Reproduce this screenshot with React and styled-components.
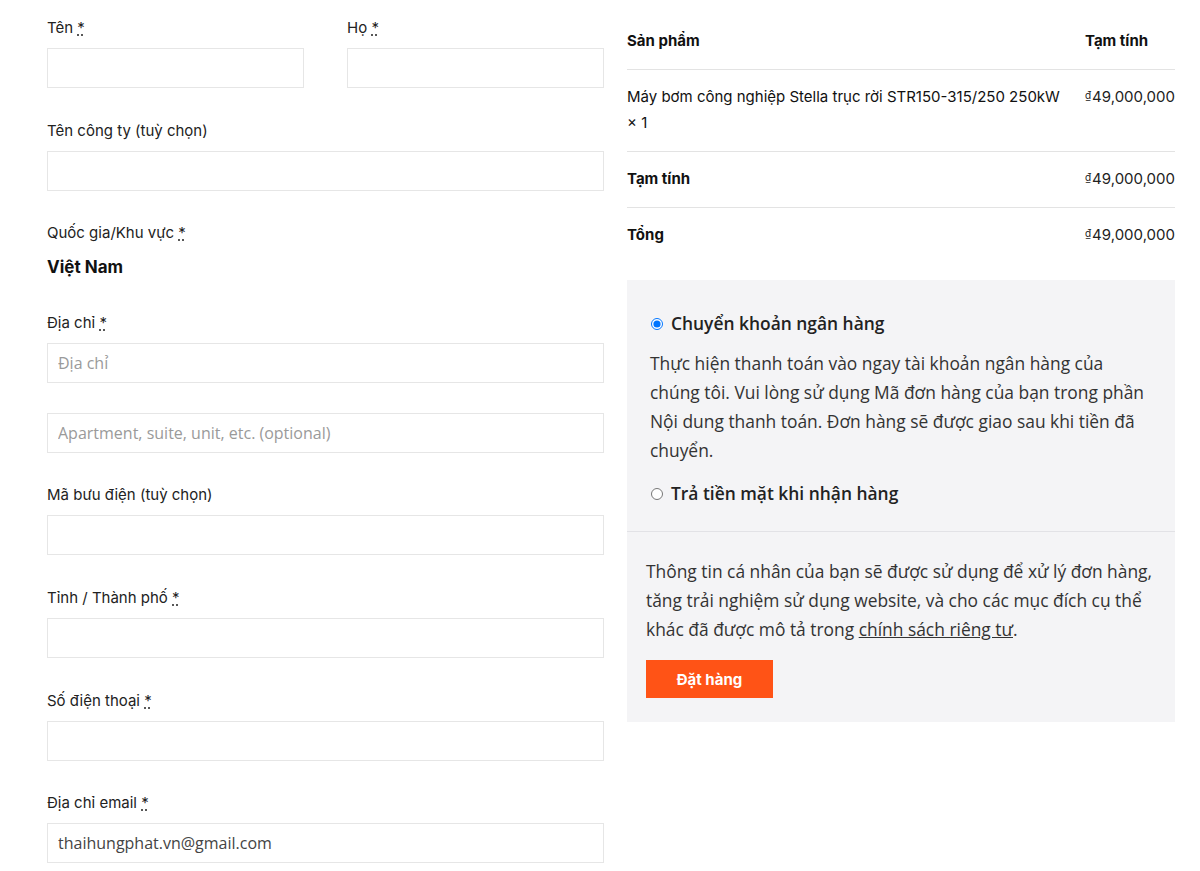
import React from "react";
import styled, { createGlobalStyle } from "styled-components";

const GlobalStyle = createGlobalStyle`
    body {
        margin: 0;
        background: #ffffff;
        font-family: Inter, "Noto Sans", sans-serif;
        color: #222222;
    }
`

function Required() {
    return <Abbr title="bắt buộc">*</Abbr>
}

function Field({ label, required, placeholder, value, half }) {
    return (
        <FieldRow $half={half}>
            <Label>
                {label} {required && <Required />}
            </Label>
            <Input placeholder={placeholder} defaultValue={value} />
        </FieldRow>
    )
}

function Price() {
    return (
        <Amount>
            <Currency>₫</Currency>49,000,000
        </Amount>
    )
}

export default function App() {
    return (
        <>
            <GlobalStyle />
            <Page>
                <Billing>
                    <NameRow>
                        <Field label="Tên" required half />
                        <Field label="Họ" required half />
                    </NameRow>
                    <Field label="Tên công ty (tuỳ chọn)" />
                    <FieldRow>
                        <Label>
                            Quốc gia/Khu vực <Required />
                        </Label>
                        <Country>Việt Nam</Country>
                    </FieldRow>
                    <FieldRow>
                        <Label>
                            Địa chỉ <Required />
                        </Label>
                        <Input placeholder="Địa chỉ" />
                        <Input placeholder="Apartment, suite, unit, etc. (optional)" $second />
                    </FieldRow>
                    <Field label="Mã bưu điện (tuỳ chọn)" />
                    <Field label="Tỉnh / Thành phố" required />
                    <Field label="Số điện thoại" required />
                    <Field label="Địa chỉ email" required value="thaihungphat.vn@gmail.com" />
                </Billing>

                <Order>
                    <Table>
                        <thead>
                            <tr>
                                <Th>Sản phẩm</Th>
                                <Th $total>Tạm tính</Th>
                            </tr>
                        </thead>
                        <tbody>
                            <tr>
                                <Td>
                                    Máy bơm công nghiệp Stella trục rời STR150-315/250 250kW <Qty>× 1</Qty>
                                </Td>
                                <Td $total>
                                    <Price />
                                </Td>
                            </tr>
                        </tbody>
                        <tfoot>
                            <tr>
                                <Th>Tạm tính</Th>
                                <Td $total>
                                    <Price />
                                </Td>
                            </tr>
                            <tr>
                                <Th>Tổng</Th>
                                <Td $total>
                                    <Price />
                                </Td>
                            </tr>
                        </tfoot>
                    </Table>

                    <Payment>
                        <Methods>
                            <Method>
                                <Radio type="radio" name="pay" defaultChecked />
                                <MethodLabel>Chuyển khoản ngân hàng</MethodLabel>
                            </Method>
                            <MethodBox>
                                Thực hiện thanh toán vào ngay tài khoản ngân hàng của chúng tôi. Vui lòng sử dụng Mã
                                đơn hàng của bạn trong phần Nội dung thanh toán. Đơn hàng sẽ được giao sau khi tiền
                                đã chuyển.
                            </MethodBox>
                            <Method>
                                <Radio type="radio" name="pay" />
                                <MethodLabel>Trả tiền mặt khi nhận hàng</MethodLabel>
                            </Method>
                        </Methods>
                        <PlaceOrder>
                            <Privacy>
                                Thông tin cá nhân của bạn sẽ được sử dụng để xử lý đơn hàng, tăng trải nghiệm sử
                                dụng website, và cho các mục đích cụ thể khác đã được mô tả trong{" "}
                                <PolicyLink href="#">chính sách riêng tư</PolicyLink>.
                            </Privacy>
                            <Button type="button">Đặt hàng</Button>
                        </PlaceOrder>
                    </Payment>
                </Order>
            </Page>
        </>
    )
}

const Page = styled.div`
    display: grid;
    grid-template-columns: 557px 548px;
    gap: 23px;
    padding: 18px 0 0 47px;
    align-items: start;
`

const Billing = styled.div`
    display: flex;
    flex-direction: column;
`

const NameRow = styled.div`
    display: flex;
    justify-content: space-between;
`

const FieldRow = styled.div`
    width: ${(p) => (p.$half ? "257px" : "100%")};
    display: flex;
    flex-direction: column;
    margin-bottom: 32.6px;
`

const Label = styled.label`
    font-size: 15px;
    line-height: 20px;
    color: #222222;
    margin-bottom: 10px;
`

const Abbr = styled.abbr`
    color: #222222;
    text-decoration: underline dotted;
    text-underline-offset: 2px;
    cursor: help;
`

const Input = styled.input`
    box-sizing: border-box;
    width: 100%;
    height: 40px;
    margin-top: ${(p) => (p.$second ? "30px" : "0")};
    padding: 0 10px;
    border: 1px solid #e6e6e6;
    border-radius: 0;
    background: #ffffff;
    font-family: "Open Sans", sans-serif;
    font-size: 16px;
    color: #444444;
    outline: none;

    &::placeholder {
        color: #9a9a9a;
    }
`

const Country = styled.strong`
    font-size: 17px;
    line-height: 26px;
    font-weight: 700;
    color: #111111;
    margin-top: 1px;
`

const Order = styled.div`
    display: flex;
    flex-direction: column;
    margin-top: -4px;
`

const Table = styled.table`
    width: 100%;
    border-collapse: collapse;
    font-size: 15px;
    line-height: 26px;
    color: #111111;

    tbody tr th,
    tbody tr td,
    tfoot tr th,
    tfoot tr td {
        border-top: 1px solid #e3e3e3;
    }
`

const Th = styled.th`
    text-align: left;
    font-weight: 700;
    padding: 14px 0 15px;
    padding-left: ${(p) => (p.$total ? "14px" : "0")};
    width: ${(p) => (p.$total ? "1%" : "auto")};
    white-space: ${(p) => (p.$total ? "nowrap" : "normal")};
    vertical-align: top;
`

const Td = styled.td`
    text-align: left;
    padding: 14px 0 15px;
    padding-left: ${(p) => (p.$total ? "14px" : "0")};
    vertical-align: top;
    white-space: ${(p) => (p.$total ? "nowrap" : "normal")};
`

const Qty = styled.span`
    white-space: nowrap;
`

const Amount = styled.span`
    color: #222222;
`

const Currency = styled.span`
    font-size: 10px;
    line-height: 1;
    vertical-align: 3px;
    margin-right: 1px;
`

const Payment = styled.div`
    margin-top: 17px;
    background: #f4f4f6;
    font-family: "Open Sans", sans-serif;
    color: #333333;
`

const Methods = styled.div`
    padding: 29px 26px 23px 24px;
    border-bottom: 1px solid #e2e2e6;
    display: flex;
    flex-direction: column;
`

const Method = styled.div`
    display: flex;
    align-items: center;
    gap: 8px;
    line-height: 29px;
`

const Radio = styled.input`
    width: 12px;
    height: 12px;
    margin: 0;
`

const MethodLabel = styled.label`
    font-size: 17.4px;
    font-weight: 600;
    color: #222222;
`

const MethodBox = styled.p`
    margin: 11px 0 14px -1px;
    font-size: 17.4px;
    line-height: 29px;
    color: #333333;
`

const PlaceOrder = styled.div`
    padding: 25px 20px 24px 19px;
`

const Privacy = styled.p`
    margin: 0 0 16px;
    font-size: 17.4px;
    line-height: 29px;
    color: #333333;
`

const PolicyLink = styled.a`
    color: #333333;
    text-decoration: underline;
`

const Button = styled.button`
    width: 127px;
    height: 38px;
    border: none;
    background: #ff5316;
    color: #ffffff;
    font-family: Inter, sans-serif;
    font-size: 15px;
    font-weight: 700;
    cursor: pointer;
`
